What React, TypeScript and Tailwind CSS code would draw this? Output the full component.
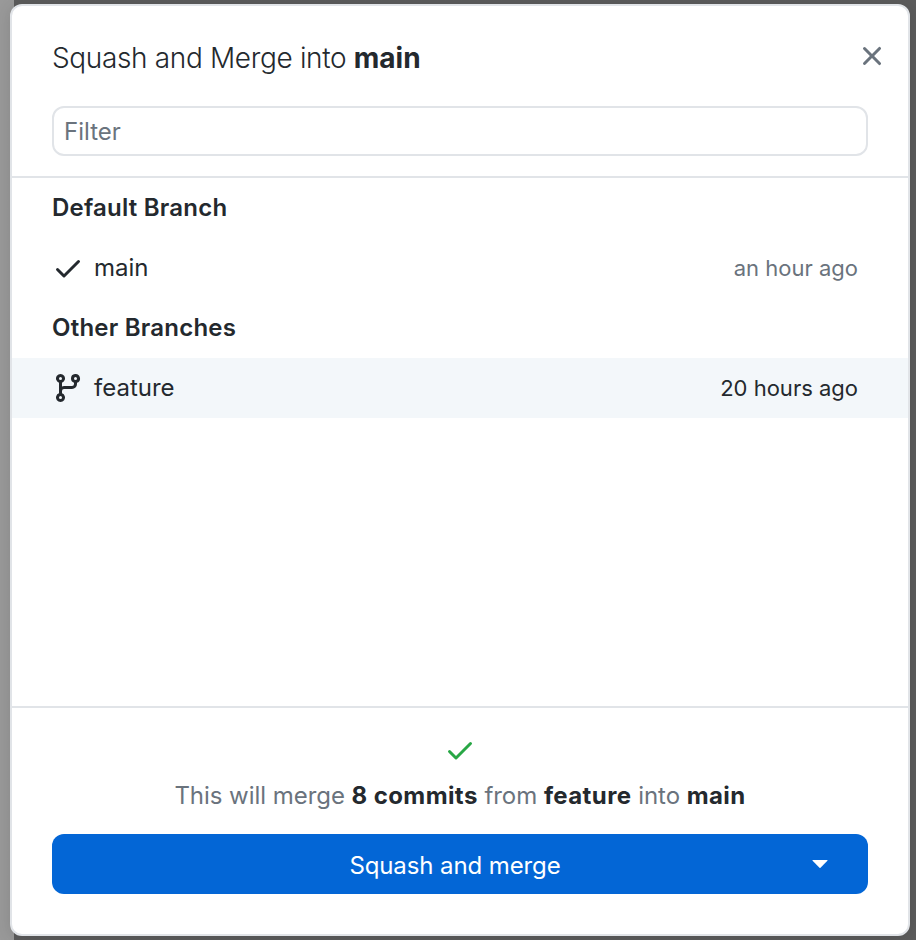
import React from "react";

const paths = {
  check:
    "M13.78 4.22a.75.75 0 010 1.06l-7.25 7.25a.75.75 0 01-1.06 0L2.22 9.28a.75.75 0 011.06-1.06L6 10.94l6.72-6.72a.75.75 0 011.06 0z",
  close:
    "M3.72 3.72a.75.75 0 011.06 0L8 6.94l3.22-3.22a.75.75 0 111.06 1.06L9.06 8l3.22 3.22a.75.75 0 11-1.06 1.06L8 9.06l-3.22 3.22a.75.75 0 01-1.06-1.06L6.94 8 3.72 4.78a.75.75 0 010-1.06z",
  branch:
    "M11.75 2.5a.75.75 0 100 1.5.75.75 0 000-1.5zm-2.25.75a2.25 2.25 0 113 2.122V6A2.5 2.5 0 0110 8.5H6a1 1 0 00-1 1v1.128a2.251 2.251 0 11-1.5 0V5.372a2.25 2.25 0 111.5 0v1.836A2.492 2.492 0 016 7h4a1 1 0 001-1v-.628A2.25 2.25 0 019.5 3.25zM4.25 12a.75.75 0 100 1.5.75.75 0 000-1.5zM3.5 3.25a.75.75 0 111.5 0 .75.75 0 01-1.5 0z",
};

function Icon({ name, className = "" }: { name: keyof typeof paths; className?: string }) {
  return (
    <svg viewBox="0 0 16 16" className={`size-8 shrink-0 ${className}`} fill="currentColor" fillRule="evenodd" aria-hidden="true">
      <path d={paths[name]} />
    </svg>
  );
}

function GroupLabel({ children }: { children: React.ReactNode }) {
  return (
    <h2 className="flex h-[60px] items-center px-10 text-[24px] font-semibold tracking-[0.22px]">
      <span>{children}</span>
    </h2>
  );
}

function BranchRow({ name, time, icon, active = false }: { name: string; time: string; icon: "check" | "branch"; active?: boolean }) {
  return (
    <li className={`flex h-[60px] items-center pr-[50px] pl-10 ${active ? "bg-[#f3f7fa]" : ""}`}>
      <Icon name={icon} />
      <span className="ml-[10px] text-[24px]">{name}</span>
      <span className={`ml-auto text-[22px] ${active ? "" : "text-[#6a737d]"}`}>{time}</span>
    </li>
  );
}

function Strong({ children }: { children: React.ReactNode }) {
  return <strong className="font-bold tracking-[0.4px] text-[#24292e]">{children}</strong>;
}

export default function App() {
  return (
    <div className="h-[940px] w-[916px] overflow-hidden bg-linear-to-r from-[#999999] from-[14px] to-[#5c5c5c] to-[14px] px-[10px] pt-1 pr-[6px] font-['Inter',sans-serif] text-[#24292e]">
      <section className="flex h-[932px] w-[900px] flex-col overflow-hidden rounded-xl border-2 border-[#e1e4e8] bg-white shadow-[0_2px_16px_rgba(0,0,0,0.12)]">
        <header className="h-[172px] border-b-2 border-[#e1e4e8] px-10">
          <div className="flex h-[100px] items-center justify-between">
            <h1 className="mt-1 text-[28px] leading-[42px] font-light tracking-[-0.35px]">
              Squash and Merge into <strong className="font-bold tracking-normal">main</strong>
            </h1>
            <button aria-label="Close" className="-mr-5 text-[#6a737d]">
              <Icon name="close" />
            </button>
          </div>
          <input
            placeholder="Filter"
            className="block h-[50px] w-full rounded-xl border-2 border-[#e1e4e8] px-[10px] text-[24px] placeholder:text-[#6a737d]"
          />
        </header>
        <main className="h-[528px]">
          <GroupLabel>Default Branch</GroupLabel>
          <ul>
            <BranchRow name="main" time="an hour ago" icon="check" />
          </ul>
          <GroupLabel>Other Branches</GroupLabel>
          <ul>
            <BranchRow name="feature" time="20 hours ago" icon="branch" active />
          </ul>
        </main>
        <footer className="flex flex-1 flex-col items-center border-t-2 border-[#e1e4e8] px-10 pt-[26px]">
          <Icon name="check" className="text-[#28a745]" />
          <p className="mt-[12px] text-[24px] leading-[36px] tracking-[-0.04px] whitespace-nowrap text-[#6a737d]">
            This will merge <Strong>8 commits</Strong> from <Strong>feature</Strong> into <Strong>main</Strong>
          </p>
          <button className="mt-5 grid h-[60px] w-full shrink-0 grid-cols-[86px_1fr_96px] items-center rounded-xl bg-[#0366d6] text-[24px] text-white">
            <span className="col-start-2 pt-[3px] tracking-[-0.1px]">Squash and merge</span>
            <svg viewBox="0 0 16 8" className="h-2 w-4 justify-self-center" fill="currentColor" aria-hidden="true">
              <path d="M.8 0h14.4q.6.3.2.8L8.5 7.7q-.5.4-1 0L.6.8Q.2.3.8 0z" />
            </svg>
          </button>
        </footer>
      </section>
    </div>
  );
}
